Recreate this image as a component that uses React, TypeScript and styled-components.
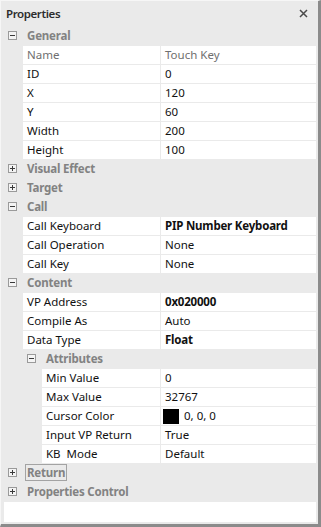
import styled, { createGlobalStyle } from "styled-components";

const GlobalStyle = createGlobalStyle`
  html, body {
    margin: 0;
    padding: 0;
    background: #ffffff;
  }
  body {
    font-family: "Noto Sans", "Open Sans", sans-serif;
    font-size: 11.5px;
  }
`

const Panel = styled.div`
  width: 321px;
  height: 527px;
  box-sizing: border-box;
  background: #eaeaea;
  border-top: 1px solid #f6f6f6;
  border-left: 1px solid #f6f6f6;
  border-right: 3px solid #8b8b8b;
  border-bottom: 3px solid #8b8b8b;
  display: flex;
  flex-direction: column;
  overflow: hidden;
`

const TitleBar = styled.div`
  height: 25px;
  display: flex;
  align-items: center;
  justify-content: space-between;
  padding: 0 10px 0 5px;
`

const Title = styled.span`
  font-weight: 600;
  color: #2d2d2d;
  letter-spacing: -0.4px;
`

const CloseButton = styled.button`
  border: none;
  background: none;
  padding: 0;
  width: 9px;
  height: 9px;
  display: flex;
  cursor: pointer;
`

const Grid = styled.div`
  display: flex;
  flex-direction: column;
`

const CategoryRow = styled.div<{ $depth: number }>`
  height: 19px;
  display: flex;
  align-items: center;
  padding-left: ${(p) => 7 + p.$depth * 19}px;
`

const Toggle = styled.span`
  position: relative;
  width: 9px;
  height: 9px;
  box-sizing: border-box;
  border: 1px solid #9a9a9a;
  background: #f4f4f4;
  flex-shrink: 0;
  &::before {
    content: "";
    position: absolute;
    left: 1px;
    top: 3px;
    width: 5px;
    height: 1px;
    background: #3a3a3a;
  }
`

const Plus = styled(Toggle)`
  &::after {
    content: "";
    position: absolute;
    left: 3px;
    top: 1px;
    width: 1px;
    height: 5px;
    background: #3a3a3a;
  }
`

const CategoryLabel = styled.span<{ $focused?: boolean }>`
  margin-left: ${(p) => (p.$focused ? 8 : 10)}px;
  padding: 0 ${(p) => (p.$focused ? 1 : 0)}px;
  border: ${(p) => (p.$focused ? "1px solid #a3a3a3" : "none")};
  font-weight: 700;
  letter-spacing: -0.2px;
  color: #828282;
  line-height: 15px;
`

const PropRow = styled.div<{ $depth: number }>`
  height: 19px;
  box-sizing: border-box;
  padding-top: 1px;
  padding-left: ${(p) => 22 + p.$depth * 19}px;
  padding-right: 2px;
  display: flex;
  gap: 1px;
`

const NameCell = styled.div<{ $muted?: boolean }>`
  flex: 1;
  background: #ffffff;
  padding-left: 4px;
  line-height: 18px;
  color: ${(p) => (p.$muted ? "#6f6f6f" : "#111111")};
  white-space: pre;
  overflow: hidden;
`

const ValueCell = styled.div<{ $muted?: boolean; $bold?: boolean }>`
  width: 151px;
  flex-shrink: 0;
  background: #ffffff;
  padding-left: 4px;
  line-height: 18px;
  display: flex;
  align-items: center;
  color: ${(p) => (p.$muted ? "#6f6f6f" : "#111111")};
  font-weight: ${(p) => (p.$bold ? 700 : 400)};
  letter-spacing: ${(p) => (p.$bold ? "-0.2px" : "0")};
  white-space: nowrap;
  overflow: hidden;
`

const Swatch = styled.span<{ $color: string }>`
  width: 16px;
  height: 15px;
  background: ${(p) => p.$color};
  margin: 0 5px 0 -2px;
`

const Description = styled.div`
  margin: 1px 2px 0 3px;
  height: 20px;
  background: #ffffff;
`

type Item =
  | { kind: "cat"; label: string; depth: number; open: boolean; focused?: boolean }
  | { kind: "prop"; name: string; value: string; depth: number; bold?: boolean; muted?: boolean; swatch?: string }

const items: Item[] = [
  { kind: "cat", label: "General", depth: 0, open: true },
  { kind: "prop", name: "Name", value: "Touch Key", depth: 0, muted: true },
  { kind: "prop", name: "ID", value: "0", depth: 0 },
  { kind: "prop", name: "X", value: "120", depth: 0 },
  { kind: "prop", name: "Y", value: "60", depth: 0 },
  { kind: "prop", name: "Width", value: "200", depth: 0 },
  { kind: "prop", name: "Height", value: "100", depth: 0 },
  { kind: "cat", label: "Visual Effect", depth: 0, open: false },
  { kind: "cat", label: "Target", depth: 0, open: false },
  { kind: "cat", label: "Call", depth: 0, open: true },
  { kind: "prop", name: "Call Keyboard", value: "PIP Number Keyboard", depth: 0, bold: true },
  { kind: "prop", name: "Call Operation", value: "None", depth: 0 },
  { kind: "prop", name: "Call Key", value: "None", depth: 0 },
  { kind: "cat", label: "Content", depth: 0, open: true },
  { kind: "prop", name: "VP Address", value: "0x020000", depth: 0, bold: true },
  { kind: "prop", name: "Compile As", value: "Auto", depth: 0 },
  { kind: "prop", name: "Data Type", value: "Float", depth: 0, bold: true },
  { kind: "cat", label: "Attributes", depth: 1, open: true },
  { kind: "prop", name: "Min Value", value: "0", depth: 1 },
  { kind: "prop", name: "Max Value", value: "32767", depth: 1 },
  { kind: "prop", name: "Cursor Color", value: "0, 0, 0", depth: 1, swatch: "#000000" },
  { kind: "prop", name: "Input VP Return", value: "True", depth: 1 },
  { kind: "prop", name: "KB  Mode", value: "Default", depth: 1 },
  { kind: "cat", label: "Return", depth: 0, open: false, focused: true },
  { kind: "cat", label: "Properties Control", depth: 0, open: false },
]

export default function App() {
  return (
    <>
      <GlobalStyle />
      <Panel>
        <TitleBar>
          <Title>Properties</Title>
          <CloseButton aria-label="Close">
            <svg width="9" height="9" viewBox="0 0 9 9">
              <path d="M1 1 L8 8 M8 1 L1 8" stroke="#4a4a4a" strokeWidth="1.5" />
            </svg>
          </CloseButton>
        </TitleBar>
        <Grid>
          {items.map((it, i) =>
            it.kind === "cat" ? (
              <CategoryRow key={i} $depth={it.depth}>
                {it.open ? <Toggle /> : <Plus />}
                <CategoryLabel $focused={it.focused}>{it.label}</CategoryLabel>
              </CategoryRow>
            ) : (
              <PropRow key={i} $depth={it.depth}>
                <NameCell $muted={it.muted}>{it.name}</NameCell>
                <ValueCell $muted={it.muted} $bold={it.bold}>
                  {it.swatch && <Swatch $color={it.swatch} />}
                  {it.value}
                </ValueCell>
              </PropRow>
            )
          )}
        </Grid>
        <Description />
      </Panel>
    </>
  )
}
